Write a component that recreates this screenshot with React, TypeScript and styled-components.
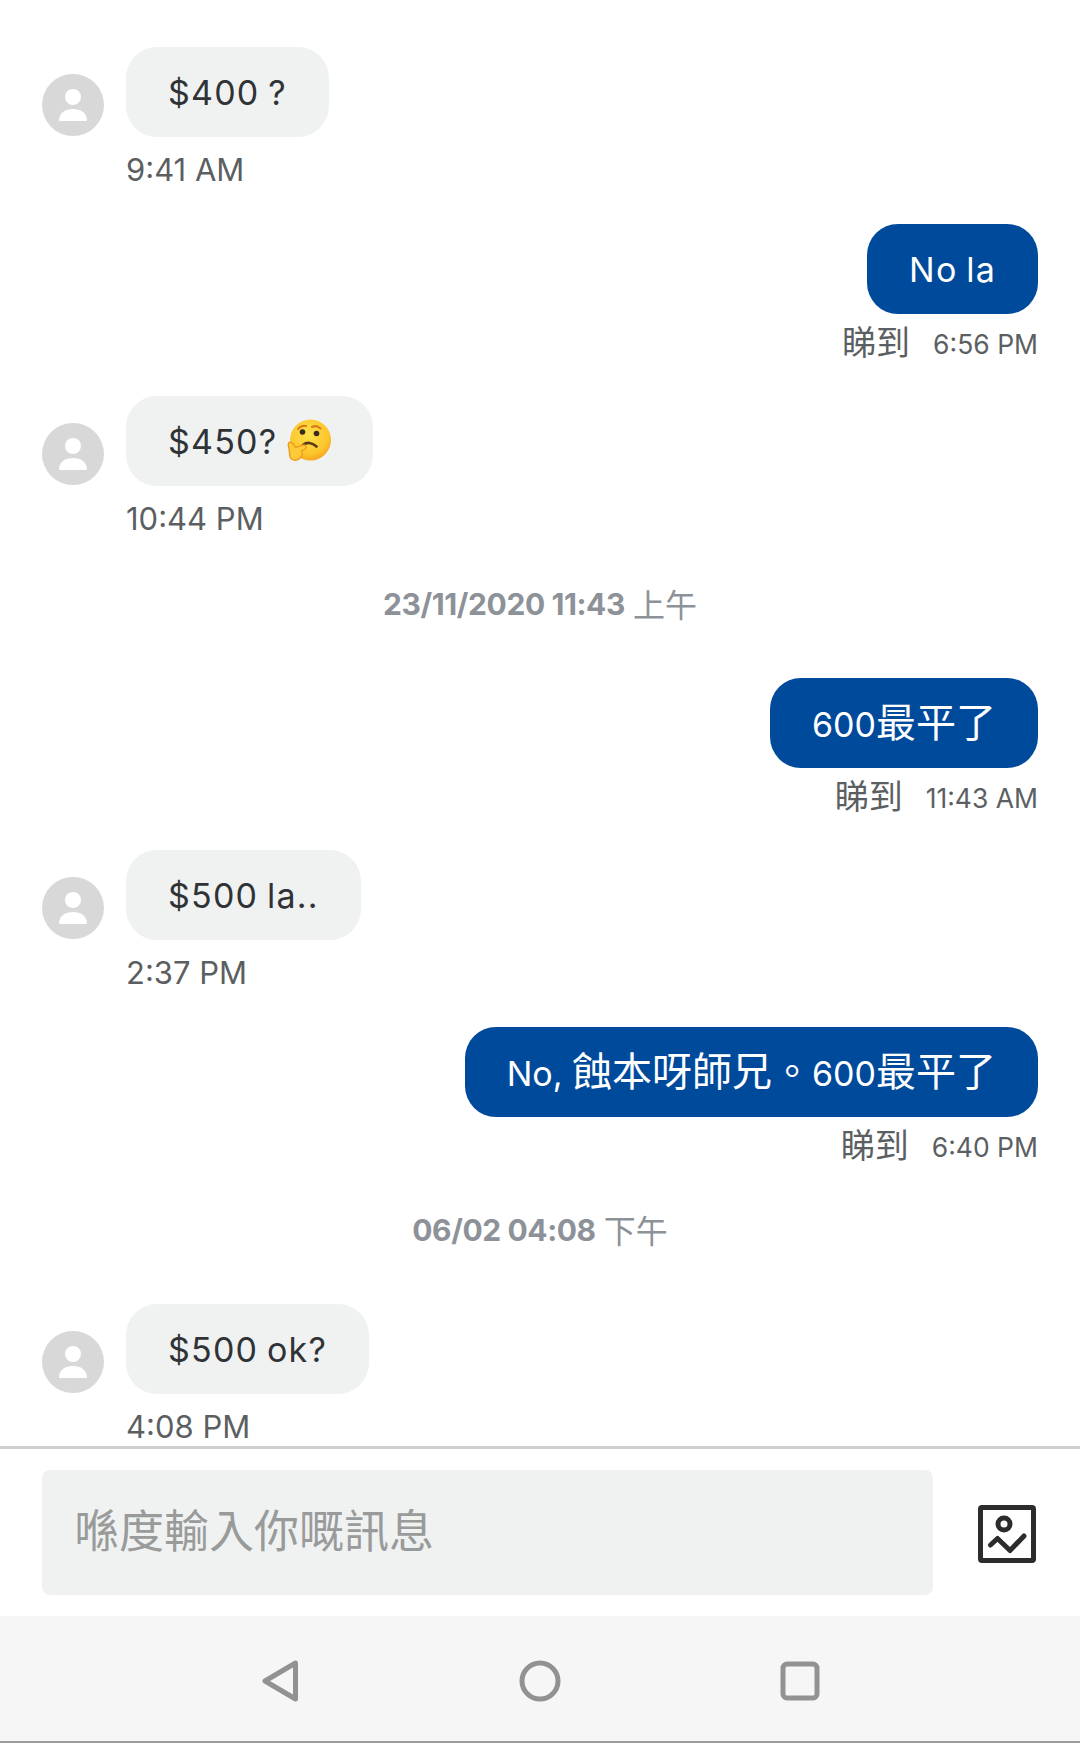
import React from 'react';
import styled, { createGlobalStyle } from 'styled-components';

const GlobalStyle = createGlobalStyle`
  html, body {
    margin: 0;
    padding: 0;
    background: #fff;
  }
  * {
    box-sizing: border-box;
  }
`;

const Screen = styled.div`
  width: 1080px;
  height: 1743px;
  display: flex;
  flex-direction: column;
  overflow: hidden;
  font-family: Inter, 'Noto Sans CJK TC', sans-serif;
  background: #fff;
`;

const Thread = styled.div`
  height: 1446px;
  padding: 47px 42px 0;
  display: flex;
  flex-direction: column;
`;

const Message = styled.div<{ $mine?: boolean }>`
  display: flex;
  flex-direction: column;
  align-items: ${(p) => (p.$mine ? 'flex-end' : 'flex-start')};
  margin-bottom: 34px;
  flex-shrink: 0;
`;

const Row = styled.div`
  display: flex;
  align-items: flex-end;
  gap: 22px;
`;

const AvatarCircle = styled.div`
  width: 62px;
  height: 62px;
  border-radius: 50%;
  background: #d8d8d8;
  display: flex;
  align-items: center;
  justify-content: center;
  margin-bottom: 1px;
`;

const Bubble = styled.div<{ $mine?: boolean }>`
  height: 90px;
  padding: 0 42px;
  border-radius: 31px;
  display: flex;
  align-items: center;
  gap: 10px;
  font-size: 34px;
  letter-spacing: 1.2px;
  word-spacing: -2px;
  white-space: pre;
  color: ${(p) => (p.$mine ? '#fff' : '#303336')};
  background: ${(p) => (p.$mine ? '#004a9c' : '#f0f2f2')};
`;

const MixedText = styled.span`
  display: block;
  margin-bottom: 7px;
  letter-spacing: 0;
  word-spacing: 0;
`;

const Cjk = styled.span`
  font-family: 'Noto Sans CJK TC', sans-serif;
  font-size: 40px;
`;

const Time = styled.div`
  height: 40px;
  margin: 13px 0 0 84px;
  line-height: 40px;
  font-size: 31px;
  color: #5c5f62;
`;

const Receipt = styled.div`
  height: 40px;
  margin-top: 8px;
  display: flex;
  align-items: center;
  gap: 23px;
  color: #5c5f62;
`;

const ReceiptSeen = styled.span`
  font-family: 'Noto Sans CJK TC', sans-serif;
  font-size: 34px;
  margin-bottom: 4px;
`;

const ReceiptTime = styled.span`
  font-size: 26.5px;
  margin-top: 4px;
`;

const DateLabel = styled.div`
  height: 40px;
  margin: 11px 0 54px;
  display: flex;
  align-items: center;
  justify-content: center;
  gap: 8px;
  font-size: 30px;
  font-weight: 700;
  letter-spacing: -0.4px;
  color: #8d9198;
  flex-shrink: 0;
`;

const DatePeriod = styled.span`
  font-family: 'Noto Sans CJK TC', sans-serif;
  font-size: 32px;
  font-weight: 400;
  letter-spacing: 0;
  margin-bottom: 3px;
`;

const Composer = styled.div`
  height: 170px;
  padding: 21px 42px 21px;
  display: flex;
  align-items: flex-start;
  justify-content: space-between;
  border-top: 3px solid #cdcfd1;
  background: #fff;
`;

const MessageInput = styled.div`
  width: 891px;
  height: 125px;
  padding: 0 0 8px 32px;
  display: flex;
  align-items: center;
  border-radius: 8px;
  background: #f0f2f2;
  font-family: 'Noto Sans CJK TC', sans-serif;
  font-size: 45px;
  color: #999b9b;
`;

const ImageButton = styled.div`
  margin: 35px 2px 0 0;
  width: 58px;
  height: 58px;
`;

const NavBar = styled.div`
  flex: 1;
  display: flex;
  align-items: center;
  justify-content: center;
  gap: 218px;
  padding-top: 5px;
  background: #f6f6f6;
  border-bottom: 2px solid #9c9c9c;
`;

const NavIcon = styled.svg`
  width: 42px;
  height: 42px;
  fill: none;
  stroke: #929292;
  stroke-width: 5;
  stroke-linejoin: round;
`;

const Avatar = () => (
  <AvatarCircle>
    <svg width="30" height="34" viewBox="0 0 30 34">
      <circle cx="15" cy="9" r="8" fill="#fff" />
      <path d="M1.5 33a2 2 0 0 1-.4-1.4C1.800 24.500 7 21 15 21s13.200 3.500 13.900 10.600a2 2 0 0 1-.4 1.400z" fill="#fff" />
    </svg>
  </AvatarCircle>
);

const ThinkingEmoji = () => (
  <svg width="44" height="44" viewBox="0 0 44 44" style={{ flexShrink: 0 }}>
    <defs>
      <radialGradient id="face" cx="45%" cy="35%" r="70%">
        <stop offset="0%" stopColor="#fde04a" />
        <stop offset="70%" stopColor="#fcc52d" />
        <stop offset="100%" stopColor="#f59e1c" />
      </radialGradient>
    </defs>
    <circle cx="23.500" cy="21" r="20.500" fill="url(#face)" />
    <path d="M11 10c2-2.500 5-3.500 8-3" stroke="#d9791c" strokeWidth="2" fill="none" strokeLinecap="round" />
    <path d="M25 8c3-1.500 6-1 8.500 1.500" stroke="#d9791c" strokeWidth="2" fill="none" strokeLinecap="round" />
    <circle cx="15.500" cy="13" r="2.800" fill="#3b2a1c" />
    <circle cx="29.500" cy="14.500" r="2.800" fill="#3b2a1c" />
    <path d="M16 26c3.500-3 9-3 13.500 1.500" stroke="#5a3a1c" strokeWidth="2.600" fill="none" strokeLinecap="round" />
    <path
      d="M1.500 24c1.500-1.500 3.500-.5 4.500 1l2.500 3.500 8-2.500c2.500-.5 4 2.500 1.500 4l-3.500 2c1.500 2.500.5 5-1 6.500-2 2.500-6 3.500-8.500 2-2.500-1.500-2.500-4.500-2.500-7 0-3.500-2-7.500-1-9.500z"
      fill="#fdcb38"
      stroke="#ee9c1c"
      strokeWidth="1.400"
    />
  </svg>
);

const ImageIcon = () => (
  <ImageButton>
    <svg width="58" height="58" viewBox="0 0 58 58" fill="none" stroke="#2c2c2c" strokeWidth="5">
      <rect x="2.500" y="2.500" width="53" height="53" rx="1.500" strokeLinejoin="round" />
      <circle cx="26" cy="19" r="6" />
      <path d="M12.500 40L19.500 33.500L32 45.500L46 31" strokeLinecap="round" strokeLinejoin="round" />
    </svg>
  </ImageButton>
);

const Incoming = ({ time, children }: { time: string; children: React.ReactNode }) => (
  <Message>
    <Row>
      <Avatar />
      <Bubble>{children}</Bubble>
    </Row>
    <Time>{time}</Time>
  </Message>
);

const Outgoing = ({ time, children }: { time: string; children: React.ReactNode }) => (
  <Message $mine>
    <Bubble $mine>{children}</Bubble>
    <Receipt>
      <ReceiptSeen>睇到</ReceiptSeen>
      <ReceiptTime>{time}</ReceiptTime>
    </Receipt>
  </Message>
);

const App = () => {
  return (
    <Screen>
      <GlobalStyle />
      <Thread>
        <Incoming time="9:41 AM">$400 ?</Incoming>
        <Outgoing time="6:56 PM">No la</Outgoing>
        <Incoming time="10:44 PM">
          <span>$450?</span>
          <ThinkingEmoji />
        </Incoming>
        <DateLabel>
          23/11/2020 11:43 <DatePeriod>上午</DatePeriod>
        </DateLabel>
        <Outgoing time="11:43 AM">
          <MixedText>
            600<Cjk>最平了</Cjk>
          </MixedText>
        </Outgoing>
        <Incoming time="2:37 PM">$500 la..</Incoming>
        <Outgoing time="6:40 PM">
          <MixedText>
            No, <Cjk>蝕本呀師兄。</Cjk>600<Cjk>最平了</Cjk>
          </MixedText>
        </Outgoing>
        <DateLabel>
          06/02 04:08 <DatePeriod>下午</DatePeriod>
        </DateLabel>
        <Incoming time="4:08 PM">$500 ok?</Incoming>
      </Thread>
      <Composer>
        <MessageInput>喺度輸入你嘅訊息</MessageInput>
        <ImageIcon />
      </Composer>
      <NavBar>
        <NavIcon viewBox="0 0 42 42">
          <path d="M36.500 3V39L6 21Z" />
        </NavIcon>
        <NavIcon viewBox="0 0 42 42">
          <circle cx="21" cy="21" r="18" />
        </NavIcon>
        <NavIcon viewBox="0 0 42 42">
          <rect x="4" y="4" width="34" height="34" rx="4" />
        </NavIcon>
      </NavBar>
    </Screen>
  );
};

export default App;
